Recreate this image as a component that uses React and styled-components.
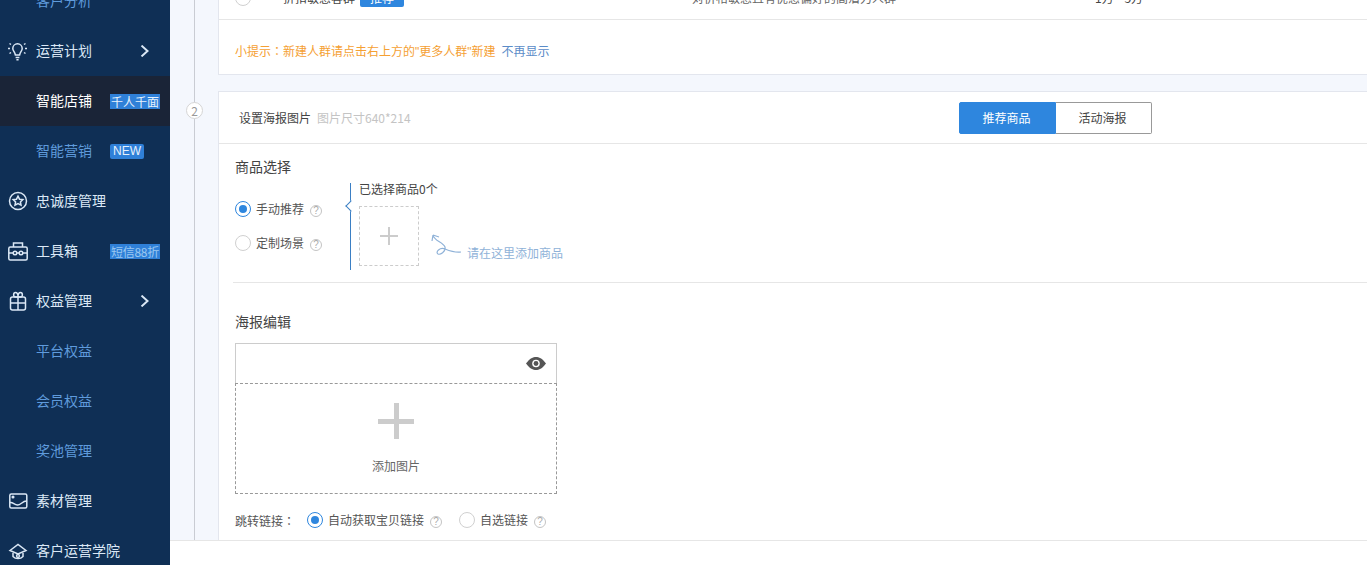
import React from 'react'
import styled, { createGlobalStyle } from 'styled-components'

const GlobalStyle = createGlobalStyle`
  html, body {
    margin: 0;
    padding: 0;
    background: #fff;
  }
  * {
    box-sizing: border-box;
  }
  body {
    font-family: "Noto Sans CJK SC", "Liberation Sans", sans-serif;
    font-size: 12px;
    color: #555;
  }
`

const Page = styled.div`
  display: flex;
  width: 1367px;
  height: 565px;
  overflow: hidden;
`

const Sidebar = styled.nav`
  flex: 0 0 170px;
  background: #0f2f55;
  overflow: hidden;
`

const NavList = styled.div`
  margin-top: -24px;
`

const NavItem = styled.div`
  display: flex;
  align-items: center;
  height: 50px;
  padding-left: 8px;
  font-size: 14px;
  color: ${p => (p.$active ? '#fff' : p.$sub ? '#5f9bdc' : '#dbe8f6')};
  background: ${p => (p.$active ? '#1a2437' : 'transparent')};
`

const IconSlot = styled.span`
  display: flex;
  flex: 0 0 28px;
  align-items: center;
  height: 20px;
`

const NavLabel = styled.span`
  min-width: 74px;
  padding-bottom: 2px;
  line-height: 18px;
  white-space: nowrap;
`

const NavBadge = styled.span`
  width: 50px;
  height: 15px;
  font-size: 12px;
  line-height: 15px;
  letter-spacing: ${p => (p.$dim ? '-0.3px' : '0')};
  text-align: center;
  white-space: nowrap;
  overflow: hidden;
  color: ${p => (p.$dim ? '#9cc8f0' : '#e6f1fc')};
  background: #2f80d8;
`

const NewBadge = styled(NavBadge)`
  width: 34px;
  border-radius: 2px;
  font-family: "Liberation Sans", sans-serif;
`

const Chevron = styled.svg`
  width: 10px;
  height: 12px;
  margin-left: 30px;
`

const Main = styled.main`
  display: flex;
  flex: 1;
  flex-direction: column;
  min-width: 0;
`

const Content = styled.div`
  display: flex;
  flex: 1;
  min-height: 0;
  overflow: hidden;
  background: #f4f7fd;
`

const Rail = styled.div`
  position: relative;
  flex: 0 0 48px;

  &::before {
    content: '';
    position: absolute;
    top: 0;
    bottom: 0;
    left: 24px;
    width: 1px;
    background: #c9ccd3;
  }
`

const StepBadge = styled.span`
  position: absolute;
  top: 102px;
  left: 16px;
  width: 17px;
  height: 17px;
  border: 1px solid #d5d5d5;
  border-radius: 50%;
  font-size: 12px;
  line-height: 15px;
  text-align: center;
  color: #999;
  background: #fff;
`

const Cards = styled.div`
  flex: 1;
  min-width: 0;
  margin-top: -25px;
`

const Card = styled.section`
  margin-bottom: 16px;
  border: 1px solid #e3e6ee;
  border-right: 0;
  background: #fff;
`

const AudienceRow = styled.div`
  display: flex;
  align-items: center;
  height: 44px;
  padding-left: 16px;
  border-bottom: 1px solid #e6e6e6;
  color: #444;
`

const AudienceName = styled.span`
  margin-left: 32px;
  width: 77px;
`

const RecommendTag = styled.span`
  width: 44px;
  height: 18px;
  border-radius: 2px;
  line-height: 18px;
  text-align: center;
  color: #fff;
  background: #2e86de;
`

const AudienceDesc = styled.span`
  margin-left: 288px;
  width: 403px;
  color: #666;
`

const TipRow = styled.div`
  display: flex;
  align-items: center;
  gap: 6px;
  height: 54px;
  padding: 8px 0 0 16px;
  line-height: 16px;
`

const TipText = styled.span`
  color: #f5a033;
`

const TipLink = styled.a`
  color: #5a8cc8;
`

// the reference draws the full-width colon centred in its cell, as the TC face does
const Colon = styled.span`
  font-family: "Noto Sans CJK TC", sans-serif;
`

const Quote = styled.span`
  font-family: "Liberation Sans", sans-serif;
`

const CardHeader = styled.header`
  display: flex;
  align-items: center;
  height: 52px;
  border-bottom: 1px solid #e6e6e6;
`

const HeaderTitle = styled.div`
  display: flex;
  flex: 0 0 740px;
  gap: 6px;
  padding-left: 20px;
  color: #444;
`

const HeaderNote = styled.span`
  color: #c4c4c4;
`

const Segmented = styled.div`
  display: flex;
  width: 193px;
  height: 32px;
`

const Segment = styled.button`
  flex: 1;
  padding: 0 2px 0 0;
  border: 1px solid ${p => (p.$active ? '#2e86de' : '#999')};
  border-left-width: ${p => (p.$active ? '1px' : '0')};
  border-radius: ${p => (p.$active ? '2px 0 0 2px' : '0 2px 2px 0')};
  font: inherit;
  color: ${p => (p.$active ? '#fff' : '#444')};
  background: ${p => (p.$active ? '#2e86de' : '#fff')};
`

const CardBody = styled.div`
  padding: 13px 0 40px 16px;
`

const SectionTitle = styled.h3`
  margin: 0;
  padding-bottom: 2px;
  font-size: 14px;
  font-weight: 400;
  line-height: 18px;
  color: #444;
`

const Picker = styled.div`
  display: flex;
  margin-top: 6px;
`

const RadioColumn = styled.div`
  display: flex;
  flex: 0 0 115px;
  flex-direction: column;
  gap: 14px;
  padding-top: 16px;
`

const RadioRow = styled.label`
  display: flex;
  align-items: center;
  gap: 5px;
  height: 20px;
  line-height: 20px;
  color: #555;
`

const Radio = styled.span`
  display: flex;
  flex: 0 0 16px;
  align-items: center;
  justify-content: center;
  width: 16px;
  height: 16px;
  border: 1px solid ${p => (p.$on ? '#2e86de' : '#d0d0d0')};
  border-radius: 50%;
  background: #fff;

  &::after {
    content: '';
    display: ${p => (p.$on ? 'block' : 'none')};
    width: 8px;
    height: 8px;
    border-radius: 50%;
    background: #2e86de;
  }
`

const Help = styled.span`
  flex: 0 0 12px;
  width: 12px;
  height: 12px;
  margin: 3px 0 0 1px;
  border: 1px solid #c4c4c4;
  border-radius: 50%;
  font-family: "Liberation Sans", sans-serif;
  font-size: 10px;
  line-height: 10px;
  text-align: center;
  color: #aaa;
`

const GoodsPanel = styled.div`
  position: relative;
  height: 87px;
  padding-left: 8px;
  border-left: 1px solid #3b7fc4;

  &::before {
    content: '';
    position: absolute;
    top: 19px;
    left: -4px;
    width: 7px;
    height: 7px;
    border-left: 1px solid #3b7fc4;
    border-bottom: 1px solid #3b7fc4;
    background: #fff;
    transform: rotate(45deg);
  }
`

const GoodsCount = styled.div`
  line-height: 12px;
  color: #444;
`

const GoodsRow = styled.div`
  display: flex;
  align-items: flex-end;
  margin-top: 11px;
`

const AddBox = styled.div`
  display: flex;
  align-items: center;
  justify-content: center;
  width: 60px;
  height: 60px;
  border: 1px dashed #ccc;
`

const Plus = styled.span`
  position: relative;
  display: block;
  flex: none;
  width: ${p => p.$size}px;
  height: ${p => p.$size}px;

  &::before,
  &::after {
    content: '';
    position: absolute;
    background: #ccc;
  }
  &::before {
    top: calc(50% - ${p => p.$weight / 2}px);
    left: 0;
    width: 100%;
    height: ${p => p.$weight}px;
  }
  &::after {
    top: 0;
    left: calc(50% - ${p => p.$weight / 2}px);
    width: ${p => p.$weight}px;
    height: 100%;
  }
`

const HintArrow = styled.svg`
  flex: none;
  width: 30px;
  height: 26px;
  margin: 0 6px 6px 12px;
`

const HintText = styled.span`
  margin-bottom: 6px;
  line-height: 14px;
  color: #8fb2d8;
`

const Divider = styled.div`
  height: 1px;
  margin: 12px 0 29px -2px;
  background: #e6e6e6;
`

const PosterBox = styled.div`
  width: 322px;
  margin-top: 11px;
`

const PosterTop = styled.div`
  display: flex;
  align-items: center;
  justify-content: flex-end;
  height: 40px;
  padding-right: 10px;
  border: 1px solid #ccc;
  border-bottom: 0;
`

const EyeIcon = styled.svg`
  width: 20px;
  height: 13px;
`

const PosterDrop = styled.div`
  display: flex;
  flex-direction: column;
  align-items: center;
  height: 111px;
  padding-top: 19px;
  border: 1px dashed #999;
`

const DropLabel = styled.span`
  margin-top: 19px;
  line-height: 16px;
  color: #666;
`

const LinkRow = styled.div`
  display: flex;
  align-items: center;
  height: 20px;
  margin-top: 16px;
  color: #555;
`

const LinkLabel = styled.span`
  width: 72px;
`

const LinkOption = styled(RadioRow)`
  margin-right: 17px;
`

const Footer = styled.footer`
  flex: 0 0 25px;
  border-top: 1px solid #e6e6e6;
  background: #fff;
`

const stroke = { fill: 'none', stroke: 'currentColor', strokeWidth: 1.5 }

const BulbIcon = () => (
  <svg width="20" height="20" viewBox="0 0 20 20" {...stroke}>
    <path d="M4.8 7.5a4.7 4.7 0 1 1 9.4 0c0 2.4-2 3.2-2.6 6.5H7.4c-.6-3.3-2.6-4.1-2.6-6.5z" />
    <path d="M7.6 16.5h3.8M8.4 18.7h2.2M0 7.5h2M17 7.5h2M1.5 2.5l1.5 1M17.5 2.5l-1.5 1M1.5 12.5l1.5-1M17.5 12.5l-1.5-1" />
  </svg>
)

const StarIcon = () => (
  <svg width="20" height="20" viewBox="0 0 20 20" {...stroke}>
    <circle cx="10" cy="10" r="8.5" />
    <path d="M10 5.2l1.5 3 3.3.4-2.4 2.3.6 3.3-3-1.6-3 1.6.6-3.3-2.4-2.3 3.3-.4z" />
  </svg>
)

const ToolboxIcon = () => (
  <svg width="20" height="20" viewBox="0 0 20 20" {...stroke}>
    <rect x="0.8" y="6" width="18.4" height="13" rx="1.5" />
    <path d="M5.5 6V2h9v4M1 12h4M9 12h2M15 12h4" />
    <circle cx="7" cy="12" r="1.8" />
    <circle cx="13" cy="12" r="1.8" />
  </svg>
)

const GiftIcon = () => (
  <svg width="20" height="20" viewBox="0 0 20 20" {...stroke}>
    <rect x="2.5" y="6" width="15" height="13" rx="2" />
    <path d="M2.5 12h15M10 6v13M10 6H7.5C5 6 5 1.5 7.5 1.5 9 1.5 10 3.5 10 6zM10 6h2.5c2.5 0 2.5-4.5 0-4.5C11 1.5 10 3.5 10 6z" />
  </svg>
)

const ImageIcon = () => (
  <svg width="20" height="20" viewBox="0 0 20 20" {...stroke}>
    <rect x="1.8" y="3" width="17" height="14" rx="1.5" />
    <path d="M2 11.5c3-.5 4 2 7.5 2.5 3 .3 5-4 9-4" />
    <circle cx="5" cy="6" r=".8" />
  </svg>
)

const AcademyIcon = () => (
  <svg width="20" height="20" viewBox="0 0 20 20" {...stroke}>
    <path d="M2 9.5L10 3.5l8 6-8 3.5z" />
    <path d="M5 12v3.5c2.5 2.8 7.5 2.8 10 0V12" />
    <circle cx="10" cy="15" r="1.4" />
  </svg>
)

const ChevronRight = () => (
  <Chevron viewBox="0 0 10 12" fill="none" stroke="currentColor" strokeWidth="2">
    <path d="M1.5.6l6 5.4-6 5.4" />
  </Chevron>
)

const navItems = [
  { label: '客户分析', sub: true },
  { label: '运营计划', icon: <BulbIcon />, arrow: true },
  { label: '智能店铺', sub: true, active: true, badge: '千人千面' },
  { label: '智能营销', sub: true, isNew: true },
  { label: '忠诚度管理', icon: <StarIcon /> },
  { label: '工具箱', icon: <ToolboxIcon />, badge: '短信88折', dim: true },
  { label: '权益管理', icon: <GiftIcon />, arrow: true },
  { label: '平台权益', sub: true },
  { label: '会员权益', sub: true },
  { label: '奖池管理', sub: true },
  { label: '素材管理', icon: <ImageIcon /> },
  { label: '客户运营学院', icon: <AcademyIcon /> },
]

const App = () => {
  return (
    <Page>
      <GlobalStyle />
      <Sidebar>
        <NavList>
          {navItems.map(item => (
            <NavItem key={item.label} $sub={item.sub} $active={item.active}>
              <IconSlot>{item.icon}</IconSlot>
              <NavLabel>{item.label}</NavLabel>
              {item.badge && <NavBadge $dim={item.dim}>{item.badge}</NavBadge>}
              {item.isNew && <NewBadge>NEW</NewBadge>}
              {item.arrow && <ChevronRight />}
            </NavItem>
          ))}
        </NavList>
      </Sidebar>
      <Main>
        <Content>
          <Rail>
            <StepBadge>2</StepBadge>
          </Rail>
          <Cards>
            <Card>
              <AudienceRow>
                <Radio />
                <AudienceName>折扣敏感客群</AudienceName>
                <RecommendTag>推荐</RecommendTag>
                <AudienceDesc>对价格敏感且有优惠偏好的高潜力人群</AudienceDesc>
                <span>1万—5万</span>
              </AudienceRow>
              <TipRow>
                <TipText>
                  小提示<Colon>：</Colon>新建人群请点击右上方的<Quote>"</Quote>更多人群<Quote>"</Quote>新建
                </TipText>
                <TipLink>不再显示</TipLink>
              </TipRow>
            </Card>
            <Card>
              <CardHeader>
                <HeaderTitle>
                  <span>设置海报图片</span>
                  <HeaderNote>图片尺寸640*214</HeaderNote>
                </HeaderTitle>
                <Segmented>
                  <Segment $active>推荐商品</Segment>
                  <Segment>活动海报</Segment>
                </Segmented>
              </CardHeader>
              <CardBody>
                <SectionTitle>商品选择</SectionTitle>
                <Picker>
                  <RadioColumn>
                    <RadioRow>
                      <Radio $on />
                      手动推荐
                      <Help>?</Help>
                    </RadioRow>
                    <RadioRow>
                      <Radio />
                      定制场景
                      <Help>?</Help>
                    </RadioRow>
                  </RadioColumn>
                  <GoodsPanel>
                    <GoodsCount>已选择商品0个</GoodsCount>
                    <GoodsRow>
                      <AddBox>
                        <Plus $size={18} $weight={2} />
                      </AddBox>
                      <HintArrow viewBox="0 0 30 26" fill="none" stroke="#8fb2d8" strokeWidth="1.2">
                        <path d="M2 1L1 7M2 1l6 2M2 1c1 6 10 7 12 12 1 5-5 8-7 7-3-2 2-7 7-5 5 2 10 4 16 3" />
                      </HintArrow>
                      <HintText>请在这里添加商品</HintText>
                    </GoodsRow>
                  </GoodsPanel>
                </Picker>
                <Divider />
                <SectionTitle>海报编辑</SectionTitle>
                <PosterBox>
                  <PosterTop>
                    <EyeIcon viewBox="0 0 20 13">
                      <path fill="#555" d="M0 6.5C4 1.2 7 0 10 0s6 1.2 10 6.5C16 11.8 13 13 10 13S4 11.8 0 6.5z" />
                      <circle cx="10" cy="6.5" r="3.8" fill="#fff" />
                      <circle cx="10" cy="6.5" r="2.4" fill="#555" />
                    </EyeIcon>
                  </PosterTop>
                  <PosterDrop>
                    <Plus $size={36} $weight={5} />
                    <DropLabel>添加图片</DropLabel>
                  </PosterDrop>
                </PosterBox>
                <LinkRow>
                  <LinkLabel>跳转链接<Colon>：</Colon></LinkLabel>
                  <LinkOption>
                    <Radio $on />
                    自动获取宝贝链接
                    <Help>?</Help>
                  </LinkOption>
                  <LinkOption>
                    <Radio />
                    自选链接
                    <Help>?</Help>
                  </LinkOption>
                </LinkRow>
              </CardBody>
            </Card>
          </Cards>
        </Content>
        <Footer />
      </Main>
    </Page>
  )
}

export default App
